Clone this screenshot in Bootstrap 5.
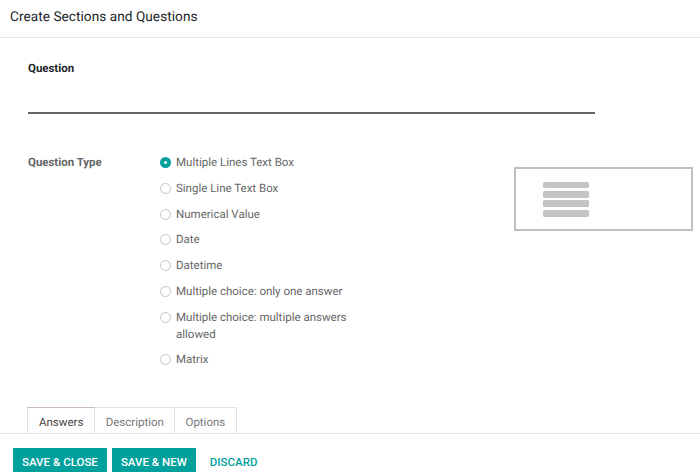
<!DOCTYPE html>
<html lang="en">
<head>
<meta charset="utf-8">
<meta name="viewport" content="width=device-width, initial-scale=1">
<title>Create Sections and Questions</title>
<link href="https://cdn.jsdelivr.net/npm/bootstrap@5.3.0/dist/css/bootstrap.min.css" rel="stylesheet">
<style>
body{font-family:Roboto,"Liberation Sans",sans-serif;font-size:11.5px;line-height:17px;color:#666;text-rendering:geometricPrecision;background:#fff}
.dialog{height:472px}
.dialog-head{height:38px;padding:0 10px 3px;border-bottom:1px solid #e5e5e5}
.dialog-title{font-size:13.6px;line-height:22px;letter-spacing:.06px;font-weight:400;color:#212529}
.dialog-main{padding:22px 7px 0 28px}
.field-label{font-weight:700;font-size:11.45px}
.field-input{width:567px;height:37px;border:0;border-bottom:2px solid #666;padding:0}
.type-row{margin-top:40px}
.label-col{width:132px}
.option-list{width:200px;gap:8.75px}
.form-check.option{min-height:0;padding-left:16px;margin:0}
.option .form-check-input{width:11px;height:11px;margin:3px 0 0 -16px;border:1px solid #c3c6ca;background-image:none;box-shadow:none}
.option .form-check-input:checked{border:4px solid #00a09d;background-color:#fff}
.preview{width:179px;height:64px;margin-top:13px;border:2px solid #bfbfbf;padding:12.5px 27px;gap:2.8px}
.preview-line{width:46px;height:7px;border-radius:1.5px;background:#c5c4c4}
.question-tabs{height:26px;margin-left:27px}
.question-tabs .nav-link{height:26px;padding:6px 10.3px 0;border:1px solid #dee2e6;border-left-width:0;border-bottom:0;border-radius:0;color:#777;line-height:17px}
.question-tabs .nav-link.active{padding-left:11px;padding-right:11px;border-left-width:1px;border-top-color:#cdb8ca;color:#444}
.dialog-foot{height:39px;border-top:1px solid #e3e5e9;padding:14px 13px 0;gap:5px}
.dialog-foot .btn{height:30px;border:0;border-radius:0;padding:4px 9px 6px;font-size:11.5px;line-height:17px;font-weight:500}
.btn-save{--bs-btn-color:#fff;--bs-btn-bg:#00a09d;--bs-btn-hover-color:#fff;--bs-btn-hover-bg:#008784}
.btn-discard{--bs-btn-color:#00a09d;--bs-btn-hover-color:#006664}
</style>
<script src="https://cdn.jsdelivr.net/npm/bootstrap@5.3.0/dist/js/bootstrap.bundle.min.js"></script>
</head>
<body class="overflow-hidden">
<div class="dialog d-flex flex-column overflow-hidden">
  <header class="dialog-head d-flex align-items-center flex-shrink-0">
    <h1 class="dialog-title m-0">Create Sections and Questions</h1>
  </header>
  <main class="dialog-main flex-grow-1">
    <label class="field-label d-block text-dark" for="question">Question</label>
    <input class="field-input d-block" id="question" type="text">
    <div class="type-row d-flex">
      <div class="label-col field-label flex-shrink-0">Question Type</div>
      <div class="option-list d-flex flex-column">
        <div class="form-check option"><input class="form-check-input" type="radio" name="type" id="t1" checked><label class="d-block" for="t1">Multiple Lines Text Box</label></div>
        <div class="form-check option"><input class="form-check-input" type="radio" name="type" id="t2"><label class="d-block" for="t2">Single Line Text Box</label></div>
        <div class="form-check option"><input class="form-check-input" type="radio" name="type" id="t3"><label class="d-block" for="t3">Numerical Value</label></div>
        <div class="form-check option"><input class="form-check-input" type="radio" name="type" id="t4"><label class="d-block" for="t4">Date</label></div>
        <div class="form-check option"><input class="form-check-input" type="radio" name="type" id="t5"><label class="d-block" for="t5">Datetime</label></div>
        <div class="form-check option"><input class="form-check-input" type="radio" name="type" id="t6"><label class="d-block" for="t6">Multiple choice: only one answer</label></div>
        <div class="form-check option"><input class="form-check-input" type="radio" name="type" id="t7"><label class="d-block" for="t7">Multiple choice: multiple answers allowed</label></div>
        <div class="form-check option"><input class="form-check-input" type="radio" name="type" id="t8"><label class="d-block" for="t8">Matrix</label></div>
      </div>
      <div class="preview d-flex flex-column ms-auto">
        <span class="preview-line"></span><span class="preview-line"></span><span class="preview-line"></span><span class="preview-line"></span>
      </div>
    </div>
  </main>
  <ul class="question-tabs nav flex-shrink-0">
    <li class="nav-item"><a class="nav-link active" href="#">Answers</a></li>
    <li class="nav-item"><a class="nav-link" href="#">Description</a></li>
    <li class="nav-item"><a class="nav-link" href="#">Options</a></li>
  </ul>
  <footer class="dialog-foot d-flex flex-shrink-0">
    <button class="btn btn-save" type="button">SAVE &amp; CLOSE</button>
    <button class="btn btn-save" type="button">SAVE &amp; NEW</button>
    <button class="btn btn-discard" type="button">DISCARD</button>
  </footer>
</div>
</body>
</html>
